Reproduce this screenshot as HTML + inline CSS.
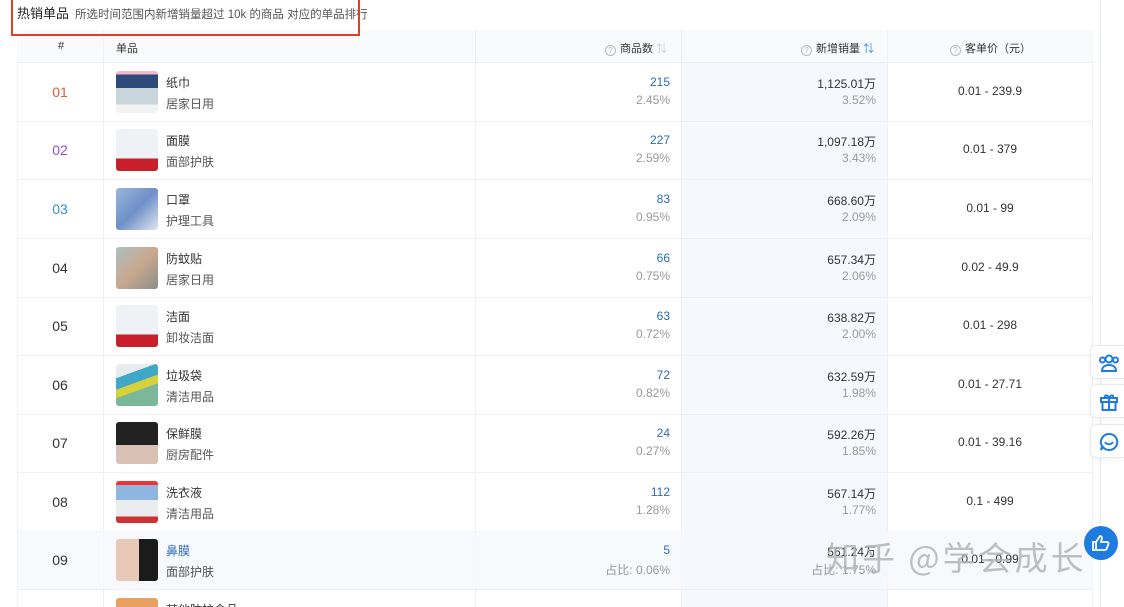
<!DOCTYPE html>
<html style="overflow:hidden;height:607px"><head><meta charset="utf-8"><style>
*{margin:0;padding:0;box-sizing:border-box}
body{width:1124px;height:607px;overflow:hidden;background:#fff;font-family:"Liberation Sans","Noto Sans CJK SC",sans-serif;color:#333;position:relative;font-size:12px}
.abs{position:absolute}
.title{left:17px;top:3px;font-size:13px;color:#222}
.sub{left:75px;top:6px;font-size:11.5px;color:#555}
.red{left:11px;top:-2px;width:349px;height:38px;border:2px solid #e0401f}
.tbl{left:17px;top:30px;width:1076px;height:577px;border-left:1px solid #eef0f3;border-right:1px solid #eef0f3}
.hdr{left:17px;top:30px;width:1076px;height:33px;background:#f8fafc;border-bottom:1px solid #eef0f3}
.vl{top:30px;width:1px;height:577px;background:#eef0f3}
.blue{left:682px;top:30px;width:205px;height:577px;background:#f5f8fc}
.h{top:40px;font-size:11px;color:#333}
.q{display:inline-block;width:11px;height:11px;border:1px solid #bbb;border-radius:50%;font-size:8px;line-height:9px;text-align:center;color:#bbb;vertical-align:-1px;margin-right:4px}
.row{position:absolute;left:17px;width:1076px;height:59px;border-bottom:1px solid #eef0f3;overflow:hidden}
.rk{position:absolute;left:0;width:86px;text-align:center;top:21px;font-size:14px;color:#333}
.th{position:absolute;left:99px;top:8px;width:42px;height:42px;border-radius:3px}
.nm{position:absolute;left:149px;top:11px;font-size:12px;color:#333}
.ct{position:absolute;left:149px;top:32px;font-size:12px;color:#555}
.n1{position:absolute;right:423px;top:12px;color:#2a6db5;font-size:12px}
.p1{position:absolute;right:423px;top:30px;color:#999;font-size:12px}
.n2{position:absolute;right:217px;top:12px;color:#333;font-size:12px}
.p2{position:absolute;right:217px;top:30px;color:#999;font-size:12px}
.pr{position:absolute;left:870px;width:206px;text-align:center;top:21px;font-size:12px;color:#333}
.sb{position:absolute;left:1090px;width:34px;height:34px;background:#fff;border:1px solid #e6e9ee;border-right:none;border-radius:6px 0 0 6px;box-shadow:0 1px 4px rgba(0,0,0,.06)}
</style></head><body>
<div class="abs blue"></div>
<div class="abs tbl"></div>
<div class="abs hdr"></div>
<div class="abs" style="left:1100px;top:0;width:1px;height:607px;background:#e6e9ee"></div>
<div class="abs vl" style="left:103px"></div>
<div class="abs vl" style="left:475px"></div>
<div class="abs vl" style="left:681px"></div>
<div class="abs vl" style="left:887px"></div>
<div class="abs title">热销单品</div>
<div class="abs sub">所选时间范围内新增销量超过 10k 的商品 对应的单品排行</div>
<div class="abs red"></div>
<div class="abs h" style="left:58px">#</div>
<div class="abs h" style="left:116px">单品</div>
<div class="abs h" style="left:605px"><span class="q">?</span>商品数 <span style="color:#ccc">⇅</span></div>
<div class="abs h" style="left:801px"><span class="q">?</span>新增销量 <span style="color:#3a8ee6">⇅</span></div>
<div class="abs h" style="left:950px"><span class="q">?</span>客单价（元）</div>

<div class="row" style="top:63px"><div class="rk" style="color:#e8553b">01</div><div class="th" style="background:linear-gradient(180deg,#f3b7c7 0 8%,#2d4a7a 8% 40%,#c8d6dc 40% 80%,#f2f2f2 80%)"></div><div class="nm">纸巾</div><div class="ct">居家日用</div><div class="n1">215</div><div class="p1">2.45%</div><div class="n2">1,125.01万</div><div class="p2">3.52%</div><div class="pr">0.01 - 239.9</div></div>
<div class="row" style="top:121px"><div class="rk" style="color:#9b4dc9">02</div><div class="th" style="background:linear-gradient(180deg,#eef2f5 0 70%,#c8202a 70%)"></div><div class="nm">面膜</div><div class="ct">面部护肤</div><div class="n1">227</div><div class="p1">2.59%</div><div class="n2">1,097.18万</div><div class="p2">3.43%</div><div class="pr">0.01 - 379</div></div>
<div class="row" style="top:180px"><div class="rk" style="color:#2f8fd8">03</div><div class="th" style="background:linear-gradient(135deg,#9ab6dc,#6f90c8 50%,#dfe6f0)"></div><div class="nm">口罩</div><div class="ct">护理工具</div><div class="n1">83</div><div class="p1">0.95%</div><div class="n2">668.60万</div><div class="p2">2.09%</div><div class="pr">0.01 - 99</div></div>
<div class="row" style="top:239px"><div class="rk">04</div><div class="th" style="background:linear-gradient(135deg,#aebfc4,#c9a88e 50%,#8a8f8c)"></div><div class="nm">防蚊贴</div><div class="ct">居家日用</div><div class="n1">66</div><div class="p1">0.75%</div><div class="n2">657.34万</div><div class="p2">2.06%</div><div class="pr">0.02 - 49.9</div></div>
<div class="row" style="top:297px"><div class="rk">05</div><div class="th" style="background:linear-gradient(180deg,#eef2f5 0 70%,#c8202a 70%)"></div><div class="nm">洁面</div><div class="ct">卸妆洁面</div><div class="n1">63</div><div class="p1">0.72%</div><div class="n2">638.82万</div><div class="p2">2.00%</div><div class="pr">0.01 - 298</div></div>
<div class="row" style="top:356px"><div class="rk">06</div><div class="th" style="background:linear-gradient(160deg,#e8ecef 0 25%,#3fa7c7 25% 45%,#d8d23a 45% 60%,#7bb89a 60%)"></div><div class="nm">垃圾袋</div><div class="ct">清洁用品</div><div class="n1">72</div><div class="p1">0.82%</div><div class="n2">632.59万</div><div class="p2">1.98%</div><div class="pr">0.01 - 27.71</div></div>
<div class="row" style="top:414px"><div class="rk">07</div><div class="th" style="background:linear-gradient(180deg,#222 0 55%,#d9c2b5 55%)"></div><div class="nm">保鲜膜</div><div class="ct">厨房配件</div><div class="n1">24</div><div class="p1">0.27%</div><div class="n2">592.26万</div><div class="p2">1.85%</div><div class="pr">0.01 - 39.16</div></div>
<div class="row" style="top:473px"><div class="rk">08</div><div class="th" style="background:linear-gradient(180deg,#e33 0 10%,#8fb6e0 10% 45%,#ebeced 45% 85%,#c33 85%)"></div><div class="nm">洗衣液</div><div class="ct">清洁用品</div><div class="n1">112</div><div class="p1">1.28%</div><div class="n2">567.14万</div><div class="p2">1.77%</div><div class="pr">0.1 - 499</div></div>
<div class="row" style="top:531px;background:rgba(245,248,252,.8)"><div class="rk">09</div><div class="th" style="background:linear-gradient(90deg,#e8c9b8 0 55%,#1b1b1b 55%)"></div><div class="nm" style="color:#2a6db5">鼻膜</div><div class="ct">面部护肤</div><div class="n1">5</div><div class="p1">占比: 0.06%</div><div class="n2">561.24万</div><div class="p2">占比: 1.75%</div><div class="pr">0.01 - 0.99</div></div>
<div class="row" style="top:590px;height:17px;border-bottom:none"><div class="th" style="background:#e8a060"></div><div class="nm">某他防护食品</div></div>

<div class="sb" style="top:345px"><svg width="22" height="20" viewBox="0 0 22 20" style="position:absolute;left:7px;top:7px" fill="none" stroke="#1e7be0" stroke-width="2"><circle cx="11" cy="6" r="3.5"/><path d="M4 18c0-4 3-6 7-6s7 2 7 6z"/><circle cx="4.5" cy="7" r="2.5"/><circle cx="17.5" cy="7" r="2.5"/></svg></div>
<div class="sb" style="top:384px"><svg width="20" height="20" viewBox="0 0 20 20" style="position:absolute;left:8px;top:7px" fill="none" stroke="#1e7be0" stroke-width="2"><rect x="2" y="6" width="16" height="4"/><rect x="3.5" y="10" width="13" height="8"/><path d="M10 6v12M10 6C8 2 5 3 6 6M10 6c2-4 5-3 4 0"/></svg></div>
<div class="sb" style="top:424px"><svg width="20" height="20" viewBox="0 0 20 20" style="position:absolute;left:8px;top:7px" fill="none" stroke="#1e7be0" stroke-width="2"><path d="M10 2a8 8 0 1 1-6 13l-2 3 1-4A8 8 0 0 1 10 2z"/><path d="M6 10c2 3 6 3 8 0"/></svg></div>
<div class="abs" style="left:1084px;top:526px;width:34px;height:34px;border-radius:50%;background:#1e7be0"><svg width="20" height="20" viewBox="0 0 20 20" style="position:absolute;left:7px;top:7px" fill="none" stroke="#fff" stroke-width="1.8"><rect x="2" y="9" width="3" height="8"/><path d="M5 9l4-6c1 0 2 1 2 2l-1 4h6c1 0 2 1 1.5 2l-2 5c-.3 1-1 1-2 1H5"/></svg></div>
<div class="abs" style="left:826px;top:532px;font-size:33px;color:rgba(175,175,175,.8);letter-spacing:3px;font-family:'Noto Sans CJK SC',sans-serif;white-space:nowrap">知乎 @学会成长</div>
</body></html>
